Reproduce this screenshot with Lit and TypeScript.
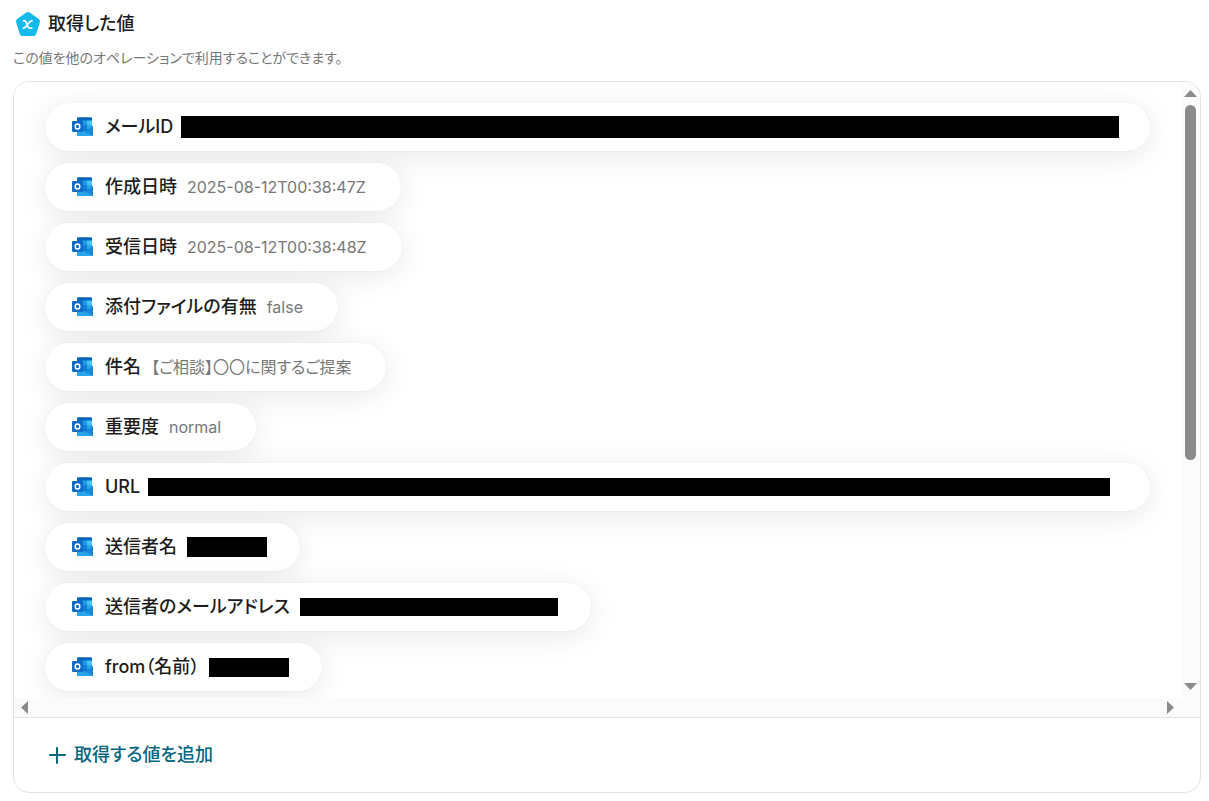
import { LitElement, html, css, svg, nothing } from "lit";
import { customElement, property } from "lit/decorators.js";
import { styleMap } from "lit/directives/style-map.js";

interface Item {
  label: string;
  value?: string;
  mask?: "wide" | "full" | "block";
  width?: number;
  height?: number;
}

const ITEMS: Item[] = [
  { label: "メールID", mask: "wide", height: 22 },
  { label: "作成日時", value: "2025-08-12T00:38:47Z" },
  { label: "受信日時", value: "2025-08-12T00:38:48Z" },
  { label: "添付ファイルの有無", value: "false" },
  { label: "件名", value: "【ご相談】〇〇に関するご提案" },
  { label: "重要度", value: "normal" },
  { label: "URL", mask: "full", height: 18 },
  { label: "送信者名", mask: "block", width: 80, height: 20 },
  { label: "送信者のメールアドレス", mask: "block", width: 258, height: 18 },
  { label: "from（名前）", mask: "block", width: 80, height: 19 },
];

const outlookIcon = svg`
  <path d="M6 .5h13a1 1 0 0 1 1 1V15H5V1.500a1 1 0 0 1 1-1z" fill="#0a6fce"/>
  <path d="M6 .5h13a1 1 0 0 1 1 1V3.500H5V1.500a1 1 0 0 1 1-1z" fill="#0364b8"/>
  <rect x="10" y="3.500" width="5" height="4.500" fill="#1f98e6"/>
  <rect x="15" y="3.500" width="5" height="4.500" fill="#45c4fa"/>
  <rect x="10" y="8" width="5" height="4.500" fill="#0f7fd8"/>
  <rect x="15" y="8" width="5" height="4.500" fill="#28a8ea"/>
  <path d="M15 12.500h5V9l1 .5v4h-6z" fill="#0f66b4"/>
  <path d="M21 9.500v8.500a1 1 0 0 1-1 1H6a1 1 0 0 1-1-1V12l7.500 2.500z" fill="#1c94e0"/>
  <path d="M21 9.500v8.500a1 1 0 0 1-.4.800L12.500 14.200z" fill="#1887d6"/>
  <path d="M5.200 18.600V13l7.300 1.200 8.100 4.600a1 1 0 0 1-.6.200H6a1 1 0 0 1-.8-.4z" fill="#28a4ea"/>
  <rect x="0" y="4" width="11" height="11" rx="1" fill="#0f6cc4"/>
  <ellipse cx="5.500" cy="9.500" rx="2.300" ry="2.500" fill="none" stroke="#fff" stroke-width="1.400"/>`;

@customElement("value-pill")
export class ValuePill extends LitElement {
  @property({ attribute: false }) item!: Item;

  static styles = css`
    :host {
      display: flex;
      align-items: center;
      box-sizing: border-box;
      max-width: 100%;
      height: 48px;
      padding: 0 35px 0 27px;
      border-radius: 24px;
      background: #fff;
      box-shadow: 0 5px 30px rgba(0, 0, 0, 0.09), 0 0 2px rgba(0, 0, 0, 0.06);
    }
    :host([kind="wide"]) {
      align-self: stretch;
      padding-right: 31px;
    }
    :host([kind="full"]) {
      align-self: stretch;
      padding-right: 40px;
    }
    :host([kind="block"]) {
      padding-right: 33px;
    }
    .icon {
      flex: none;
      width: 21px;
      height: 20px;
      margin-right: 12px;
    }
    .label {
      flex: none;
      font-size: 18px;
      line-height: 24px;
      font-weight: 500;
      color: #1c1c1c;
      white-space: nowrap;
    }
    .value {
      margin-left: 10px;
      font-size: 16px;
      line-height: 24px;
      color: #777;
      white-space: nowrap;
    }
    .mask {
      margin-left: 10px;
      background: #000;
    }
    .mask.wide,
    .mask.full {
      flex: 1;
      margin-left: 8px;
    }
  `;

  render() {
    const { label, value, mask, width, height } = this.item;
    const size = {
      height: `${height}px`,
      ...(width ? { width: `${width}px` } : {}),
    };
    return html`
      <svg class="icon" viewBox="0 0 21 20" aria-hidden="true">${outlookIcon}</svg>
      <span class="label">${label}</span>
      ${value ? html`<span class="value">${value}</span>` : nothing}
      ${mask ? html`<span class="mask ${mask}" style=${styleMap(size)}></span>` : nothing}
    `;
  }
}

@customElement("app-root")
export class AppRoot extends LitElement {
  static styles = css`
    :host {
      display: flex;
      flex-direction: column;
      box-sizing: border-box;
      height: 100vh;
      padding: 8px 8px 8px 13px;
      background: #fff;
      font-family: Inter, "Noto Sans CJK JP", sans-serif;
      font-feature-settings: "palt";
      color: #1c1c1c;
    }
    .title {
      display: flex;
      align-items: center;
      gap: 7px;
      height: 32px;
      padding-left: 2px;
    }
    .title svg {
      width: 26px;
      height: 26px;
    }
    h1 {
      margin: 0;
      font-size: 18px;
      line-height: 24px;
      font-weight: 500;
    }
    .note {
      margin: 8px 0 13px;
      font-size: 14px;
      line-height: 20px;
      color: #777;
    }
    .panel {
      flex: 1;
      min-height: 0;
      display: flex;
      flex-direction: column;
      border: 1px solid #e3e3e3;
      border-radius: 16px;
      overflow: hidden;
    }
    .scroller {
      flex: 1;
      min-height: 0;
      display: grid;
      grid-template: minmax(0, 1fr) 19px / minmax(0, 1fr) 19px;
      background: #fbfbfb;
      border-bottom: 1px solid #e3e3e3;
    }
    .list {
      display: flex;
      flex-direction: column;
      align-items: flex-start;
      gap: 12px;
      box-sizing: border-box;
      padding: 21px 31px;
      overflow: auto;
      scrollbar-width: none;
      background: #fff;
    }
    .list > * {
      flex: none;
    }
    .bar {
      display: flex;
      justify-content: space-between;
      align-items: center;
    }
    .bar svg {
      display: block;
      flex: none;
      fill: #8b8b8b;
    }
    .vertical {
      flex-direction: column;
      padding: 8px 0;
    }
    .track {
      flex: 1;
      width: 11px;
      margin: 8px 0 5px;
    }
    .thumb {
      height: 62%;
      border-radius: 6px;
      background: #8b8b8b;
    }
    .horizontal {
      padding: 0 7px;
    }
    .footer {
      padding: 21px 31px;
    }
    .add {
      display: flex;
      align-items: center;
      gap: 8px;
      padding: 4px;
      border: 0;
      background: none;
      font: inherit;
      font-feature-settings: inherit;
      font-size: 18px;
      line-height: 24px;
      font-weight: 500;
      color: #06657f;
      cursor: pointer;
    }
    .add svg {
      width: 17px;
      height: 17px;
      fill: none;
      stroke: currentColor;
      stroke-width: 2;
      stroke-linecap: round;
    }
  `;

  render() {
    return html`
      <header class="title">
        <svg viewBox="0 0 26 26" aria-hidden="true">
          <path d="M11.200 1.600a3 3 0 0 1 3.600 0l9 6.500a3 3 0 0 1 1 3.300l-3.500 11.300a3 3 0 0 1-2.900 2.200H7.600a3 3 0 0 1-2.900-2.200L1.200 11.400a3 3 0 0 1 1-3.300z" fill="#12b9ed"/>
          <path d="M8.600 9.800h.7c1 0 1.500.5 1.900 1.500l1.700 4.300c.4 1 .9 1.500 1.900 1.500h1.900M17 9.800c-1.200 0-1.900.5-2.800 1.600l-3.200 4.100c-.9 1.100-1.600 1.600-2.700 1.600" fill="none" stroke="#fff" stroke-width="1.700" stroke-linecap="round"/>
        </svg>
        <h1>取得した値</h1>
      </header>
      <p class="note">この値を他のオペレーションで利用することができます。</p>
      <section class="panel">
        <div class="scroller">
          <div class="list">
            ${ITEMS.map(
              (item) => html`<value-pill .item=${item} kind=${item.mask ?? "text"}></value-pill>`
            )}
          </div>
          <div class="bar vertical" aria-hidden="true">
            <svg width="13" height="7" viewBox="0 0 13 7"><path d="M0 7 6.500 0 13 7z"/></svg>
            <div class="track"><div class="thumb"></div></div>
            <svg width="13" height="7" viewBox="0 0 13 7"><path d="M0 0h13L6.500 7z"/></svg>
          </div>
          <div class="bar horizontal" aria-hidden="true">
            <svg width="7" height="13" viewBox="0 0 7 13"><path d="M7 0v13L0 6.500z"/></svg>
            <svg width="7" height="13" viewBox="0 0 7 13"><path d="M0 0v13l7-6.500z"/></svg>
          </div>
        </div>
        <div class="footer">
          <button class="add" type="button">
            <svg viewBox="0 0 17 17" aria-hidden="true"><path d="M8 1v15M1 8h15"/></svg>
            取得する値を追加
          </button>
        </div>
      </section>
    `;
  }
}
